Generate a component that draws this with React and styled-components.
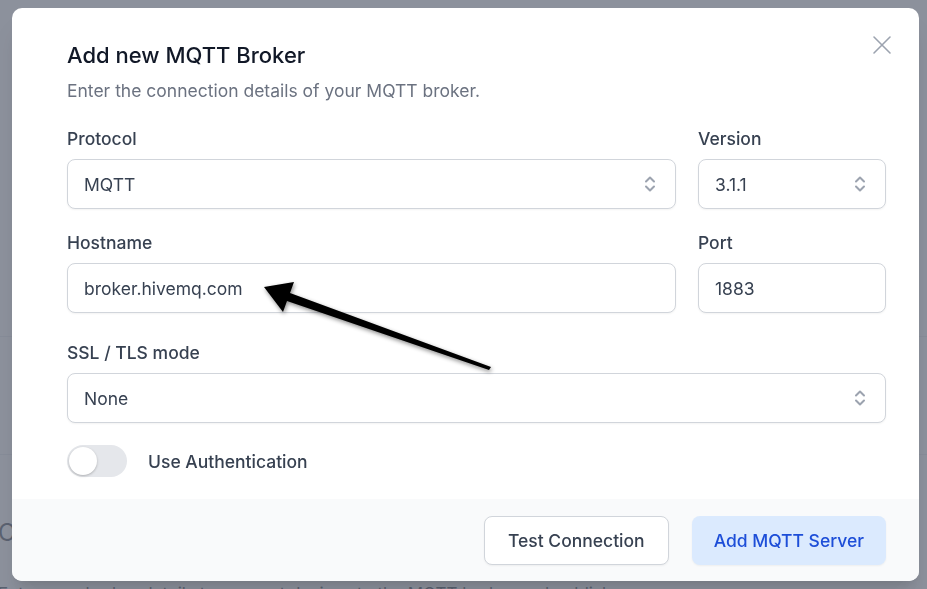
import React from "react";
import styled, { createGlobalStyle } from "styled-components";

const GlobalStyle = createGlobalStyle`
  html, body {
    margin: 0;
    padding: 0;
    width: 927px;
    height: 589px;
    overflow: hidden;
    font-family: Inter, "Noto Sans", "Liberation Sans", sans-serif;
    background: #ffffff;
  }
  * { box-sizing: border-box; }
`;

// page behind the dialog
const Page = styled.div`
  width: 927px;
  height: 589px;
  background: #ffffff;
  display: flex;
  flex-direction: column;
`;

const PageRow = styled.div`
  height: ${(p) => p.h}px;
  flex-shrink: 0;
  border-bottom: ${(p) => (p.line ? "1px solid #e5e7eb" : "none")};
  color: #1f2937;
  font-size: ${(p) => p.size || 17}px;
  line-height: ${(p) => p.h}px;
  margin-left: -2px;
  white-space: nowrap;
`;

// overlay + dialog
const Overlay = styled.div`
  position: fixed;
  inset: 0;
  background: rgba(107, 114, 128, 0.78);
  display: flex;
  padding: 8px 8px 8px 12px;
`;

const Dialog = styled.div`
  position: relative;
  flex: 1;
  background: #ffffff;
  border-radius: 10px;
  overflow: hidden;
  display: flex;
  flex-direction: column;
  box-shadow: 0 20px 25px -5px rgba(0, 0, 0, 0.1), 0 8px 10px -6px rgba(0, 0, 0, 0.1);
`;

const Body = styled.div`
  padding: 33px 33px 22px 55px;
  display: flex;
  flex-direction: column;
`;

const Title = styled.h2`
  margin: 0;
  font-size: 22px;
  line-height: 28px;
  font-weight: 500;
  color: #111827;
`;

const Subtitle = styled.p`
  margin: 10px 0 0;
  font-size: 17.5px;
  line-height: 24px;
  color: #6b7280;
`;

const Grid = styled.div`
  display: grid;
  grid-template-columns: 1fr 188px;
  column-gap: 22px;
  margin-top: ${(p) => p.mt}px;
`;

const Field = styled.div`
  display: flex;
  flex-direction: column;
  grid-column: ${(p) => (p.wide ? "1 / -1" : "auto")};
`;

const Label = styled.label`
  font-size: 17.5px;
  line-height: 24px;
  font-weight: 500;
  color: #374151;
  margin-bottom: 8px;
`;

const Control = styled.div`
  height: 50px;
  border: 1px solid #d1d5db;
  border-radius: 8px;
  background: #fff;
  box-shadow: 0 1px 2px rgba(0, 0, 0, 0.05);
  display: flex;
  align-items: center;
  justify-content: space-between;
  padding: 0 18px 0 16px;
  font-size: 17.5px;
  color: #374151;
`;

const Chevrons = () => (
  <svg width="14" height="20" viewBox="0 0 14 20" fill="none" stroke="#9ca3af" strokeWidth="2" strokeLinecap="round" strokeLinejoin="round">
    <path d="M3 7.5 L7 3.5 L11 7.5" />
    <path d="M3 12.5 L7 16.5 L11 12.5" />
  </svg>
);

const ToggleRow = styled.div`
  display: flex;
  align-items: center;
  gap: 21px;
  margin-top: 22px;
`;

const Track = styled.div`
  width: 60px;
  height: 32px;
  border-radius: 16px;
  background: #e5e7eb;
  padding: 2px;
  display: flex;
  justify-content: ${(p) => (p.on ? "flex-end" : "flex-start")};
`;

const Knob = styled.div`
  width: 28px;
  height: 28px;
  border-radius: 50%;
  background: #fff;
  box-shadow: 0 1px 3px rgba(0, 0, 0, 0.15), 0 1px 2px rgba(0, 0, 0, 0.1);
`;

const ToggleLabel = styled.span`
  font-size: 17.5px;
  font-weight: 500;
  color: #374151;
`;

const Footer = styled.div`
  flex: 1;
  background: #f9fafb;
  display: flex;
  justify-content: flex-end;
  align-items: flex-start;
  gap: 23px;
  padding: 17px 33px 0 0;
`;

const Button = styled.button`
  height: 49px;
  padding: 0 ${(p) => (p.primary ? 21 : 23)}px;
  border-radius: 8px;
  font-family: inherit;
  font-size: 17.5px;
  font-weight: 500;
  border: 1px solid ${(p) => (p.primary ? "transparent" : "#d1d5db")};
  background: ${(p) => (p.primary ? "#dbeafe" : "#ffffff")};
  color: ${(p) => (p.primary ? "#1d4ed8" : "#374151")};
  box-shadow: 0 1px 2px rgba(0, 0, 0, 0.05);
`;

const Close = styled.button`
  position: absolute;
  top: 26px;
  right: 26px;
  width: 22px;
  height: 22px;
  padding: 0;
  border: 0;
  background: none;
  display: flex;
  align-items: center;
  justify-content: center;
`;

// annotation arrow drawn on top of the screenshot
const Annotation = styled.svg`
  position: fixed;
  left: 0;
  top: 0;
  pointer-events: none;
`;

const SelectBox = ({ value }) => (
  <Control>
    <span>{value}</span>
    <Chevrons />
  </Control>
);

const InputBox = ({ value }) => (
  <Control>
    <span>{value}</span>
  </Control>
);

export default function App() {
  return (
    <>
      <GlobalStyle />
      <Page>
        <PageRow h={337} line />
        <PageRow h={118} line />
        <PageRow h={60} />
        <PageRow h={36} size={24}>Co</PageRow>
        <PageRow h={33} />
        <PageRow h={20} size={17}>
          Enter your broker details to connect devices to the MQTT broker and publish messages
        </PageRow>
      </Page>
      <Overlay>
        <Dialog>
          <Close aria-label="Close">
            <svg width="20" height="20" viewBox="0 0 20 20" stroke="#9ca3af" strokeWidth="1.6" strokeLinecap="round">
              <path d="M2 2 L18 18 M18 2 L2 18" />
            </svg>
          </Close>
          <Body>
            <Title>Add new MQTT Broker</Title>
            <Subtitle>Enter the connection details of your MQTT broker.</Subtitle>
            <Grid mt={24}>
              <Field>
                <Label>Protocol</Label>
                <SelectBox value="MQTT" />
              </Field>
              <Field>
                <Label>Version</Label>
                <SelectBox value="3.1.1" />
              </Field>
            </Grid>
            <Grid mt={22}>
              <Field>
                <Label>Hostname</Label>
                <InputBox value="broker.hivemq.com" />
              </Field>
              <Field>
                <Label>Port</Label>
                <InputBox value="1883" />
              </Field>
            </Grid>
            <Grid mt={28}>
              <Field wide>
                <Label>SSL / TLS mode</Label>
                <SelectBox value="None" />
              </Field>
            </Grid>
            <ToggleRow>
              <Track>
                <Knob />
              </Track>
              <ToggleLabel>Use Authentication</ToggleLabel>
            </ToggleRow>
          </Body>
          <Footer>
            <Button>Test Connection</Button>
            <Button primary>Add MQTT Server</Button>
          </Footer>
        </Dialog>
      </Overlay>
      <Annotation width="927" height="589" viewBox="0 0 927 589">
        <defs>
          <filter id="arrowShadow" x="-20%" y="-20%" width="140%" height="140%">
            <feDropShadow dx="1" dy="2" stdDeviation="2" floodColor="#000" floodOpacity="0.45" />
          </filter>
        </defs>
        <polygon
          filter="url(#arrowShadow)"
          fill="#000"
          points="264,287 294,282 290,293 491,367 489,370 287,301 283,312"
        />
      </Annotation>
    </>
  );
}
